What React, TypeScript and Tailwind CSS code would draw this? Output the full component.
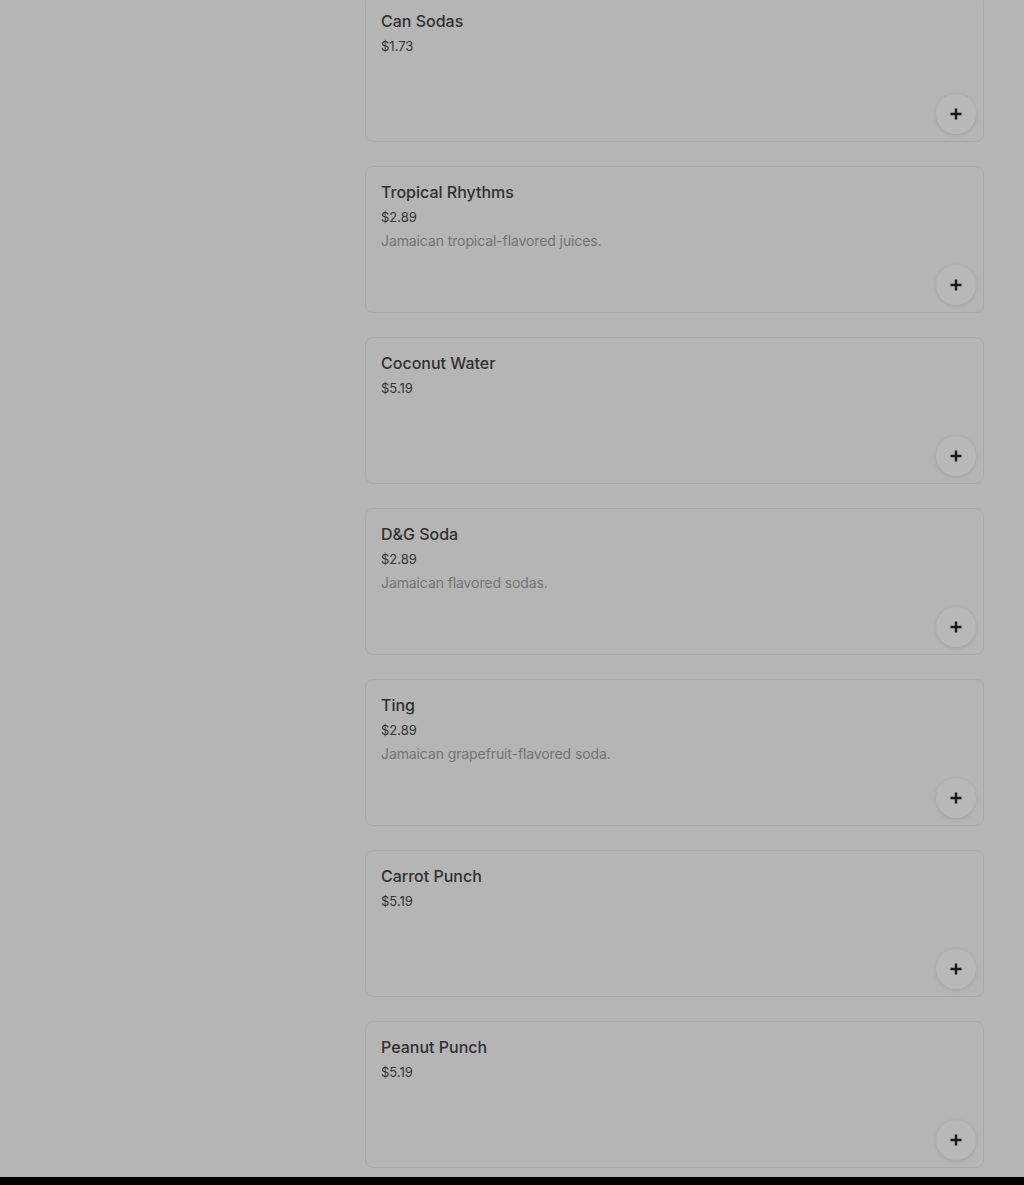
import React from "react";

type Item = { name: string; price: string; desc?: string };

const items: Item[] = [
  { name: "Can Sodas", price: "$1.73" },
  { name: "Tropical Rhythms", price: "$2.89", desc: "Jamaican tropical-flavored juices." },
  { name: "Coconut Water", price: "$5.19" },
  { name: "D&G Soda", price: "$2.89", desc: "Jamaican flavored sodas." },
  { name: "Ting", price: "$2.89", desc: "Jamaican grapefruit-flavored soda." },
  { name: "Carrot Punch", price: "$5.19" },
  { name: "Peanut Punch", price: "$5.19" },
];

function PlusIcon() {
  return (
    <svg width="12" height="12" viewBox="0 0 12 12" fill="none">
      <path d="M6 0.5v11M0.5 6h11" stroke="#1a1a1a" strokeWidth="2.4" />
    </svg>
  );
}

export default function App() {
  return (
    <div className="w-[1024px] h-[1185px] overflow-hidden bg-black" style={{ fontFamily: "Inter, Roboto, 'Liberation Sans', sans-serif" }}>
      <div className="h-[1177px] bg-[#b5b5b5] overflow-hidden flex">
        <div className="w-[365px] shrink-0" />
        <div className="w-[619px] flex flex-col gap-[24px] -mt-[5px]">
          {items.map((it) => (
            <div key={it.name} className="h-[147px] shrink-0 rounded-lg border border-[#a9a9a9] px-[15px] pt-[13px] relative">
              <div className="text-[16px] leading-[24px] font-medium text-[#303030]">{it.name}</div>
              <div className="text-[13px] leading-[22px] mt-[2px] text-[#333333]">{it.price}</div>
              {it.desc && (
                <div className="text-[14px] leading-[22px] mt-[2px] tracking-[-0.1px] text-[#737373]">{it.desc}</div>
              )}
              <button className="absolute right-[7px] bottom-[7px] w-10 h-10 rounded-full bg-[#b8b8b8] shadow-[0_1px_4px_rgba(0,0,0,0.12)] flex items-center justify-center">
                <PlusIcon />
              </button>
            </div>
          ))}
        </div>
      </div>
    </div>
  );
}
